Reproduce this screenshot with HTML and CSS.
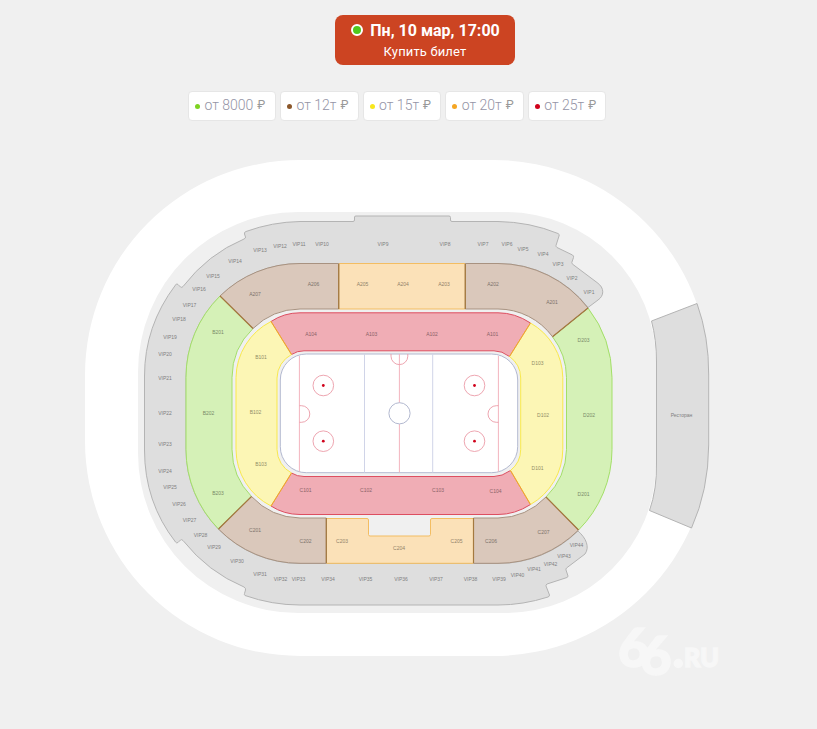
FILE: index.html
```html
<!DOCTYPE html>
<html lang="ru">
<head>
  <meta charset="UTF-8">
  <title>Купить билет</title>
  <meta name="viewport" content="width=device-width, initial-scale=1.0">
  <link rel="stylesheet" href="styles.css">
</head>
<body>
  <header class="top">
    <button type="button" class="ticket-btn">
      <span class="ticket-date"><i class="status"></i>Пн, 10 мар, 17:00</span>
      <span class="ticket-text">Купить билет</span>
    </button>
  </header>

  <div class="prices">
    <div class="price wide"><i class="dot dot-green"></i><span>от 8000</span><b>₽</b></div>
    <div class="price"><i class="dot dot-brown"></i><span>от 12т</span><b>₽</b></div>
    <div class="price"><i class="dot dot-yellow"></i><span>от 15т</span><b>₽</b></div>
    <div class="price"><i class="dot dot-orange"></i><span>от 20т</span><b>₽</b></div>
    <div class="price"><i class="dot dot-red"></i><span>от 25т</span><b>₽</b></div>
  </div>

  <svg class="arena" viewBox="0 121 817 608" width="817" height="608">
    <!-- outer ring -->
    <path class="ring" fill-rule="evenodd" d="M300 160H494A215 215 0 0 1 709 375V441A215 215 0 0 1 494 656H300A215 215 0 0 1 85 441V375A215 215 0 0 1 300 160Z
      M298 212A160 160 0 0 0 138 372V453A160 160 0 0 0 298 613H506A150 150 0 0 0 656 463V362A150 150 0 0 0 506 212Z"/>

    <!-- vip boxes -->
    <path class="sec vip" d="M300 221.5H353Q354.500 221.500 354.500 220V217Q354.500 216 356 216H449Q450.500 216 450.500 217.500V220Q450.500 221.500 452 221.500H498Q530 222 558 233.500Q560 234.500 559 236L556 245.500Q556 247 557 247.500L572.500 255Q574 256 573.500 257.500L571.800 262.500Q572 264 573 264.500L597 282.500C605 288 604 296 598 300L588 307.500A114 114 0 0 0 498 263.500H300A114 114 0 0 0 186 377.500V449.500A114 114 0 0 0 300 563.500H498A114 114 0 0 0 578 531C586 538 590 547 585 554L566.500 568Q565.500 569 566 570L568 576Q568 577 567 577.500L547 584Q545.500 585 546 586L549.500 595Q549.500 596.500 548 597Q523 605 498 605H300Q272 605 245 595.500Q244 595 244.500 593.500L245.500 590Q246 588 244 587Q208 572 183 540.500Q181.500 539 180.500 540L178 542.500Q176.500 543.500 175.500 542Q144.500 502 144.500 450V376Q144.500 326 175.500 285Q176.500 283 178 284.500L180.500 287Q182 288 183 286.500Q208 254 244 239Q246 238 245.500 237L244.500 234Q244 232 246 231.500Q272 222 300 221.500Z"/>
    <path class="sec vip" d="M651.500 321L697 303.500Q709 337 708.700 375V445Q708.500 490 691.500 528L649.500 510.500Q657 489 656.500 463V362Q656.500 340 651.500 321Z"/>

    <!-- 200 level -->
    <path class="sec green" d="M220 296A114 114 0 0 0 186 377.500V449.500A114 114 0 0 0 218.500 529L251.500 496.500A68 68 0 0 1 232 449.500V377.500A68 68 0 0 1 253 328.500Z"/>
    <path class="sec green" d="M588 308A114 114 0 0 1 612 377.500V449.500A114 114 0 0 1 578.500 530L546 497A68 68 0 0 0 566.500 449.500V377.500A68 68 0 0 0 552.500 336.700Z"/>
    <path class="sec orange" d="M338.700 263.500H465.300V309H338.700Z"/>
    <path class="sec orange" d="M326.300 518.500H367Q368.500 518.500 368.500 520V534.500Q368.500 536 370 536H429Q430.500 536 430.500 534.500V520Q430.500 518.500 432 518.500H473.500V563.300H326.300Z"/>
    <path class="sec brown" d="M220 296A114 114 0 0 1 300 263.500H338.700V309H300A68 68 0 0 0 253 328.500Z"/>
    <path class="sec brown" d="M465.300 263.500H498A114 114 0 0 1 588 308L552.500 336.700A68 68 0 0 0 498 309H465.300Z"/>
    <path class="sec brown" d="M218.500 529A114 114 0 0 0 300 563.300H326.300V518H300A68 68 0 0 1 251.500 496.500Z"/>
    <path class="sec brown" d="M473.500 518H498A68 68 0 0 0 546 497L578.500 530A114 114 0 0 1 498 563.300H473.500Z"/>
    <path class="edge-brown" d="M338.700 264V309M465.300 264V309M326.300 518V563M473.500 518V563M220 296L253 328.500M588 308L552.500 336.700M218.500 529L251.500 496.500M546 497L578.500 530"/>

    <!-- 100 level -->
    <path class="sec red" d="M271 321.500Q284 312.800 300 312.800H498Q515 312.800 530.500 323L509.500 356.500Q502 350.800 494 350.800H304Q297 350.800 291.500 354.500Z"/>
    <path class="sec red" d="M271 506L291.500 473Q297 476.500 304 476.500H494Q502 476.500 510.500 470.500L530.500 504.500Q515 514.500 498 514.500H300Q284 514.500 271 506Z"/>
    <path class="sec yellow" d="M271 321.500A64 64 0 0 0 236 377.500V449.500A64 64 0 0 0 271 506L291.500 473A27 27 0 0 1 277 449.500V378A27 27 0 0 1 291.500 354.500Z"/>
    <path class="sec yellow" d="M530.500 323A64 64 0 0 1 562.800 377.500V449.500A64 64 0 0 1 530.500 504.500L510.500 470.500A27 27 0 0 0 520.700 449.500V378A27 27 0 0 0 509.500 356.500Z"/>
    <path class="edge" d="M271 321.500L291.500 354.500M271 506L291.500 473M530.500 323L509.500 356.500M530.500 504.500L510.500 470.500"/>

    <!-- ice -->
    <rect class="ice" x="280.300" y="354" width="237.400" height="118.700" rx="26"/>
    <path class="blue-line" d="M364.500 354V472.500M432.700 354V472.500"/>
    <path class="red-line" d="M299.400 356V471.500M498.400 356V471.500M399.400 354V403M399.400 424V472.500"/>
    <g class="mark">
      <path d="M299.400 405.700H301.500A8.300 8.300 0 0 1 301.500 422.300H299.400M498.400 405.700H496.300A8.300 8.300 0 0 0 496.300 422.300H498.400M391 354V356.200A8.400 8.400 0 0 0 407.800 356.200V354"/>
      <circle cx="323.300" cy="385.500" r="10.300"/>
      <circle cx="323.300" cy="441.200" r="10.300"/>
      <circle cx="474.500" cy="385.500" r="10.300"/>
      <circle cx="474.500" cy="441.200" r="10.300"/>
    </g>
    <circle class="center-circle" cx="399.500" cy="413.300" r="10.600"/>
    <g class="spot">
      <circle cx="323.300" cy="385.500" r="1.400"/>
      <circle cx="323.300" cy="441.200" r="1.400"/>
      <circle cx="474.500" cy="385.500" r="1.400"/>
      <circle cx="474.500" cy="441.200" r="1.400"/>
    </g>

    <g class="labels" id="labels"></g>

    <g class="watermark">
      <text x="618" y="666.500" font-size="54">6<tspan dx="-9" dy="8.500">6</tspan></text>
      <circle cx="678.300" cy="663.500" r="4"/>
      <text x="684" y="666.500" font-size="26" textLength="35" lengthAdjust="spacingAndGlyphs">RU</text>
    </g>
  </svg>

  <script src="script.js"></script>
</body>
</html>
```
FILE: styles.css
```css
* {
  margin: 0;
  padding: 0;
  box-sizing: border-box;
}

body {
  width: 817px;
  height: 729px;
  overflow: hidden;
  background-color: #f0f0f0;
  font-family: Roboto, sans-serif;
}

.top {
  height: 91px;
  padding: 15px 0 0 335px;
}

.ticket-btn {
  display: flex;
  flex-direction: column;
  align-items: center;
  width: 180px;
  height: 50px;
  padding-top: 5px;
  color: #fff;
  background-color: #cc4422;
  border: none;
  border-radius: 8px;
  font-family: inherit;
  cursor: pointer;
}

.ticket-date {
  display: flex;
  align-items: center;
  font-size: 16px;
  font-weight: 700;
  line-height: 21px;
  white-space: nowrap;
}

.status {
  width: 12px;
  height: 12px;
  margin: -1px 7px 0 1px;
  background-color: #50c81e;
  border: 2px solid #fff;
  border-radius: 50%;
}

.ticket-text {
  font-size: 13px;
  font-weight: 400;
  letter-spacing: 0.15px;
  line-height: 21px;
}

.prices {
  display: flex;
  gap: 4px;
  height: 30px;
  padding-left: 188px;
}

.price {
  display: flex;
  align-items: center;
  width: 78.600px;
  height: 30px;
  padding: 0 0 2px 6px;
  color: #9494a6;
  background-color: #fff;
  border: 1px solid #e6e6e6;
  border-radius: 4px;
  font-size: 14px;
  font-weight: 300;
  white-space: nowrap;
}

.price.wide {
  width: 88px;
}

.price b {
  margin-left: 4px;
  font-size: 12px;
  font-weight: 400;
  color: #999;
}

.dot {
  width: 5px;
  height: 5px;
  margin: 2px 4.500px 0 0;
  border-radius: 50%;
}

.dot-green { background-color: #7ed321; }
.dot-brown { background-color: #8b572a; }
.dot-yellow { background-color: #f8e71c; }
.dot-orange { background-color: #f5a623; }
.dot-red { background-color: #d0021b; }

.arena {
  display: block;
}

.ring {
  fill: #fff;
}

.sec {
  stroke-width: 1;
  stroke-linejoin: round;
}

.vip {
  fill: #dedede;
  stroke: #b4b4b4;
}

.green {
  fill: #d5f1b7;
  stroke: #a3df68;
}

.orange {
  fill: #fbe1b8;
  stroke: #f3bd62;
}

.brown {
  fill: #dac8bb;
  stroke: #a89280;
}

.edge-brown {
  fill: none;
  stroke: #a4793f;
  stroke-width: 1.200;
}

.yellow {
  fill: #fcf6b5;
  stroke: #f9e94c;
}

.red {
  fill: #f0adb5;
  stroke: #dd4e60;
}

.edge {
  fill: none;
  stroke: #ee9b35;
}

.ice {
  fill: #fff;
  stroke: #b3b9d0;
}

.blue-line {
  stroke: #d0d4e8;
}

.red-line {
  stroke: #f3b5bf;
}

.mark {
  fill: none;
  stroke: #eb9ba7;
  stroke-width: 0.900;
}

.center-circle {
  fill: #fff;
  stroke: #b3b9d0;
}

.spot {
  fill: #d0021b;
}

.labels {
  font-family: "Liberation Sans", Arial, sans-serif;
  font-size: 5px;
  fill: #000;
  opacity: 0.450;
  text-anchor: middle;
}

.watermark {
  font-family: Lato, sans-serif;
  font-weight: 900;
  fill: #f7f7f7;
  stroke: #f7f7f7;
  stroke-width: 1.500;
}
```
FILE: script.js
```js
// sector name, center x, center y
const sectors = [
  ['VIP1', 589, 292], ['VIP2', 572, 278], ['VIP3', 558, 264], ['VIP4', 543, 254],
  ['VIP5', 523, 249], ['VIP6', 507, 244], ['VIP7', 483, 244], ['VIP8', 445, 244],
  ['VIP9', 383, 244], ['VIP10', 322, 244], ['VIP11', 299, 244], ['VIP12', 280, 246],
  ['VIP13', 260, 250.5], ['VIP14', 235, 261], ['VIP15', 213, 276], ['VIP16', 199, 289.5],
  ['VIP17', 189.5, 305], ['VIP18', 179, 319], ['VIP19', 170, 337], ['VIP20', 165, 354],
  ['VIP21', 165, 378], ['VIP22', 165, 413], ['VIP23', 165, 444], ['VIP24', 165, 471],
  ['VIP25', 170, 487], ['VIP26', 179, 504], ['VIP27', 189.5, 520], ['VIP28', 200.5, 535],
  ['VIP29', 214, 547], ['VIP30', 237, 561], ['VIP31', 260, 574], ['VIP32', 280.5, 579.5],
  ['VIP33', 298.5, 579.5], ['VIP34', 328, 579.5], ['VIP35', 365.5, 579.5], ['VIP36', 401, 579.5],
  ['VIP37', 436, 579.5], ['VIP38', 470.5, 579.5], ['VIP39', 499, 579.5], ['VIP40', 517.5, 575],
  ['VIP41', 534, 569.5], ['VIP42', 550.5, 564], ['VIP43', 564, 556], ['VIP44', 576.5, 545],
  ['A201', 552, 302], ['A202', 493, 284], ['A203', 444, 284], ['A204', 403, 284],
  ['A205', 362.5, 284], ['A206', 313.5, 284], ['A207', 255, 294],
  ['A101', 492.5, 334], ['A102', 432, 334], ['A103', 371.5, 334], ['A104', 311, 334],
  ['B201', 218, 332.5], ['B202', 208.5, 413], ['B203', 218, 493],
  ['B101', 261, 357], ['B102', 255.5, 412.5], ['B103', 261, 464],
  ['C101', 305.5, 490.5], ['C102', 366, 490.5], ['C103', 438, 490.5], ['C104', 495.5, 491.5],
  ['C201', 255, 530.5], ['C202', 305.5, 541], ['C203', 342, 541], ['C204', 399, 548.5],
  ['C205', 456.5, 541], ['C206', 491, 541], ['C207', 543.5, 532],
  ['D101', 537.5, 468], ['D102', 543, 415], ['D103', 537.5, 363.5],
  ['D201', 583.5, 494], ['D202', 589, 415], ['D203', 583.5, 340.5],
  ['Ресторан', 681.5, 415]
];

const labels = document.getElementById('labels');

sectors.forEach(([name, x, y]) => {
  const text = document.createElementNS('http://www.w3.org/2000/svg', 'text');
  text.setAttribute('x', x);
  text.setAttribute('y', y + 1.8);
  text.textContent = name;
  labels.appendChild(text);
});
```
